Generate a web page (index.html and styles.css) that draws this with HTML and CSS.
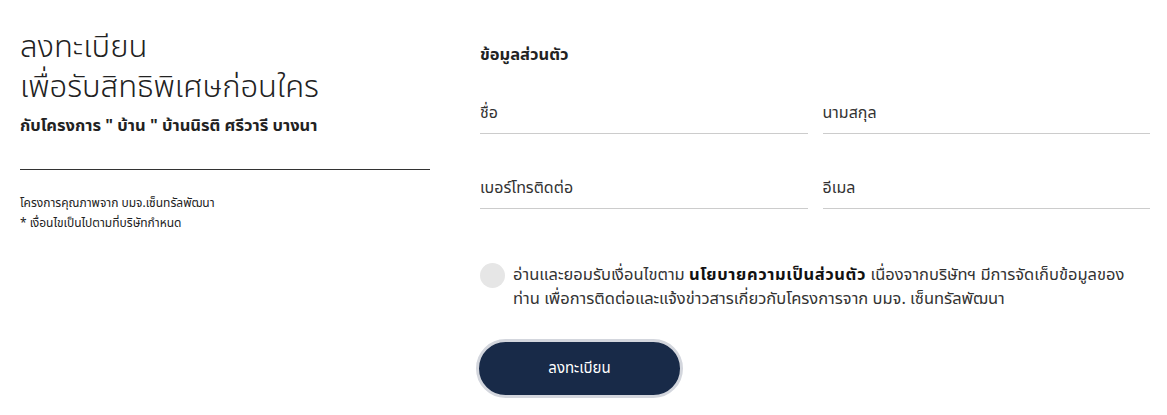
FILE: index.html
```html
<!DOCTYPE html>
<html lang="th">
<head>
    <meta charset="UTF-8">
    <meta name="viewport" content="width=device-width, initial-scale=1.0">
    <title>ลงทะเบียน</title>
    <link rel="stylesheet" href="styles.css">
</head>
<body>
    <div class="register">
        <div class="intro">
            <h1>ลงทะเบียน<br>เพื่อรับสิทธิพิเศษก่อนใคร</h1>
            <h2>กับโครงการ " บ้าน " บ้านนิรติ ศรีวารี บางนา</h2>
            <hr class="divider">
            <p class="note">โครงการคุณภาพจาก บมจ.เซ็นทรัลพัฒนา<br>* เงื่อนไขเป็นไปตามที่บริษัทกำหนด</p>
        </div>
        <form class="form" onsubmit="return false">
            <h3>ข้อมูลส่วนตัว</h3>
            <div class="fields">
                <input type="text" class="field" placeholder="ชื่อ">
                <input type="text" class="field" placeholder="นามสกุล">
                <input type="text" class="field" placeholder="เบอร์โทรติดต่อ">
                <input type="text" class="field" placeholder="อีเมล">
            </div>
            <label class="consent">
                <span class="check"></span>
                <span>อ่านและยอมรับเงื่อนไขตาม <b>นโยบายความเป็นส่วนตัว</b> เนื่องจากบริษัทฯ มีการจัดเก็บข้อมูลของท่าน เพื่อการติดต่อและแจ้งข่าวสารเกี่ยวกับโครงการจาก บมจ. เซ็นทรัลพัฒนา</span>
            </label>
            <button type="submit" class="submit">ลงทะเบียน</button>
        </form>
    </div>
</body>
</html>
```

FILE: styles.css
```css
body {
    font-family: 'Noto Sans Thai', 'Noto Sans', 'Liberation Sans', sans-serif;
    margin: 0;
    padding: 0;
    background-color: #fff;
    color: #222;
}
.register {
    display: flex;
    padding: 28px 17px 0 20px;
    gap: 50px;
}
.intro {
    width: 410px;
    flex-shrink: 0;
}
.intro h1 {
    font-size: 31px;
    font-weight: 300;
    line-height: 40px;
    margin: 0;
}
.intro h2 {
    font-size: 16.5px;
    font-weight: 700;
    margin: 6px 0 0;
    line-height: 24px;
}
.divider {
    border: none;
    border-top: 1px solid #333;
    margin: 31px 0 23px;
}
.note {
    font-size: 12px;
    line-height: 20px;
    margin: 0;
}
.form {
    flex: 1;
    padding-top: 5px;
}
.form h3 {
    font-size: 16.5px;
    font-weight: 700;
    margin: 10px 0 0;
    line-height: 24px;
}
.fields {
    display: grid;
    grid-template-columns: 1fr 1fr;
    column-gap: 15px;
    row-gap: 36px;
    margin-top: 28px;
}
.field {
    border: none;
    border-bottom: 1px solid #ccc;
    padding: 8px 0 10px;
    font-family: inherit;
    font-size: 16px;
    line-height: 20px;
    height: 39px;
    box-sizing: border-box;
    outline: none;
    background: transparent;
}
.field::placeholder {
    color: #333;
}
.consent {
    display: flex;
    gap: 8px;
    margin-top: 54px;
    font-size: 16.5px;
    line-height: 24px;
    color: #333;
    padding-right: 20px;
}
.consent b {
    color: #111;
    letter-spacing: 0.6px;
}
.check {
    width: 25px;
    height: 25px;
    border-radius: 50%;
    background: #e6e6e6;
    flex-shrink: 0;
    margin-top: 0;
}
.submit {
    margin-top: 28px;
    margin-left: -4px;
    width: 207px;
    height: 59px;
    border-radius: 30px;
    border: 3px solid #d3d6dd;
    background: #182a48;
    color: #fff;
    font-family: inherit;
    font-size: 15px;
    cursor: pointer;
}
```
